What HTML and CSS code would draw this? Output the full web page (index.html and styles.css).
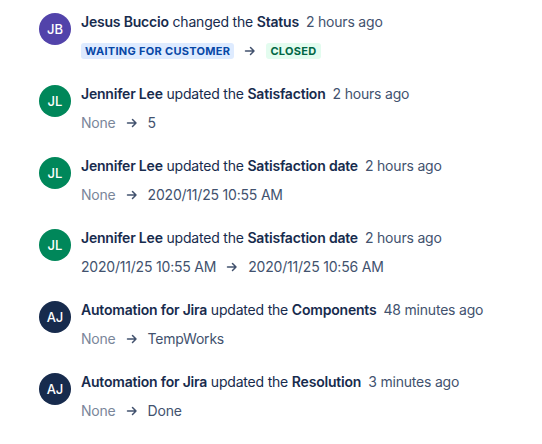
FILE: index.html
```html
<!DOCTYPE html>
<html>
<head>
<meta charset="utf-8">
<link rel="stylesheet" href="styles.css">
</head>
<body>
<ul class="history">
  <li class="entry">
    <span class="avatar avatar-purple">JB</span>
    <div class="body">
      <div class="header"><b>Jesus Buccio</b> changed the <b>Status</b><span class="time">2 hours ago</span></div>
      <div class="change">
        <span class="lozenge lozenge-blue">Waiting for customer</span>
        <svg class="arrow" viewBox="0 0 12 12" width="12" height="12"><path d="M1.5 6h8.5M6.5 2.5L10 6l-3.5 3.5" fill="none" stroke="currentColor" stroke-width="1.5" stroke-linecap="round" stroke-linejoin="round"/></svg>
        <span class="lozenge lozenge-green">Closed</span>
      </div>
    </div>
  </li>
  <li class="entry">
    <span class="avatar avatar-green">JL</span>
    <div class="body">
      <div class="header"><b>Jennifer Lee</b> updated the <b>Satisfaction</b><span class="time">2 hours ago</span></div>
      <div class="change">
        <span class="none">None</span>
        <svg class="arrow" viewBox="0 0 12 12" width="12" height="12"><path d="M1.5 6h8.5M6.5 2.5L10 6l-3.5 3.5" fill="none" stroke="currentColor" stroke-width="1.5" stroke-linecap="round" stroke-linejoin="round"/></svg>
        <span>5</span>
      </div>
    </div>
  </li>
  <li class="entry">
    <span class="avatar avatar-green">JL</span>
    <div class="body">
      <div class="header"><b>Jennifer Lee</b> updated the <b>Satisfaction date</b><span class="time">2 hours ago</span></div>
      <div class="change">
        <span class="none">None</span>
        <svg class="arrow" viewBox="0 0 12 12" width="12" height="12"><path d="M1.5 6h8.5M6.5 2.5L10 6l-3.5 3.5" fill="none" stroke="currentColor" stroke-width="1.5" stroke-linecap="round" stroke-linejoin="round"/></svg>
        <span>2020/11/25 10:55 AM</span>
      </div>
    </div>
  </li>
  <li class="entry">
    <span class="avatar avatar-green">JL</span>
    <div class="body">
      <div class="header"><b>Jennifer Lee</b> updated the <b>Satisfaction date</b><span class="time">2 hours ago</span></div>
      <div class="change">
        <span>2020/11/25 10:55 AM</span>
        <svg class="arrow" viewBox="0 0 12 12" width="12" height="12"><path d="M1.5 6h8.5M6.5 2.5L10 6l-3.5 3.5" fill="none" stroke="currentColor" stroke-width="1.5" stroke-linecap="round" stroke-linejoin="round"/></svg>
        <span>2020/11/25 10:56 AM</span>
      </div>
    </div>
  </li>
  <li class="entry">
    <span class="avatar avatar-navy">AJ</span>
    <div class="body">
      <div class="header"><b>Automation for Jira</b> updated the <b>Components</b><span class="time">48 minutes ago</span></div>
      <div class="change">
        <span class="none">None</span>
        <svg class="arrow" viewBox="0 0 12 12" width="12" height="12"><path d="M1.5 6h8.5M6.5 2.5L10 6l-3.5 3.5" fill="none" stroke="currentColor" stroke-width="1.5" stroke-linecap="round" stroke-linejoin="round"/></svg>
        <span>TempWorks</span>
      </div>
    </div>
  </li>
  <li class="entry">
    <span class="avatar avatar-navy">AJ</span>
    <div class="body">
      <div class="header"><b>Automation for Jira</b> updated the <b>Resolution</b><span class="time">3 minutes ago</span></div>
      <div class="change">
        <span class="none">None</span>
        <svg class="arrow" viewBox="0 0 12 12" width="12" height="12"><path d="M1.5 6h8.5M6.5 2.5L10 6l-3.5 3.5" fill="none" stroke="currentColor" stroke-width="1.5" stroke-linecap="round" stroke-linejoin="round"/></svg>
        <span>Done</span>
      </div>
    </div>
  </li>
</ul>
</body>
</html>
```

FILE: styles.css
```css
html, body {
  margin: 0;
  padding: 0;
  background: #ffffff;
}
body {
  font-family: Inter, "Noto Sans", sans-serif;
  font-size: 14px;
  line-height: 20px;
  letter-spacing: -0.2px;
  color: #172B4D;
}
.history {
  list-style: none;
  margin: 0;
  padding: 12px 0 0 39px;
  display: flex;
  flex-direction: column;
  gap: 23px;
}
.entry {
  display: flex;
  align-items: flex-start;
  gap: 10px;
}
.avatar {
  flex: none;
  width: 32px;
  height: 32px;
  border-radius: 50%;
  margin-top: 1px;
  color: #ffffff;
  font-size: 13px;
  font-weight: 500;
  letter-spacing: 0;
  display: flex;
  align-items: center;
  justify-content: center;
}
.avatar-purple { background: #5243AA; }
.avatar-green { background: #00875A; }
.avatar-navy { background: #172B4D; }
.body {
  display: flex;
  flex-direction: column;
  gap: 9px;
}
.header b {
  font-weight: 600;
}
.time {
  margin-left: 7px;
  color: #42526E;
}
.change {
  display: flex;
  align-items: center;
  gap: 8px;
  color: #42526E;
  height: 20px;
}
.none {
  color: #7A869A;
}
.arrow {
  color: #42526E;
  margin: 0 2px;
}
.lozenge {
  font-size: 11px;
  font-weight: 700;
  line-height: 16px;
  letter-spacing: 0.3px;
  text-transform: uppercase;
  padding: 0 4px;
  border-radius: 3px;
}
.lozenge-blue { background: #DEEBFF; color: #0747A6; }
.lozenge-green { background: #E3FCEF; color: #006644; }
```
